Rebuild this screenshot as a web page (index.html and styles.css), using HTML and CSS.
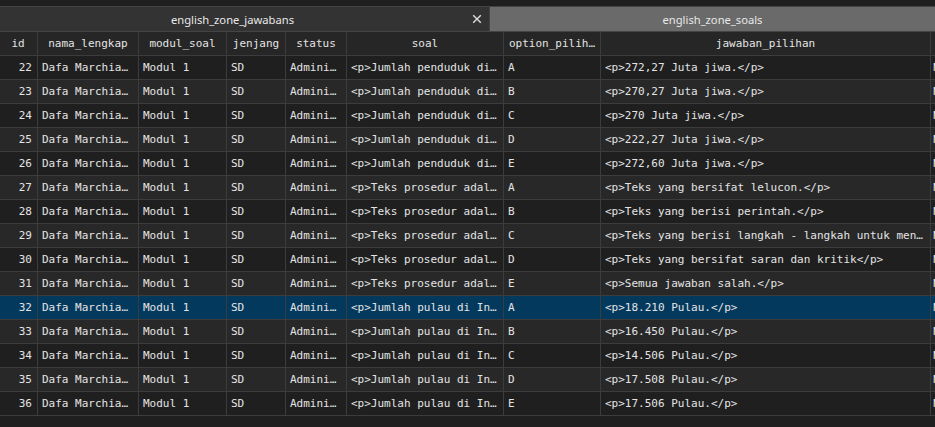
FILE: index.html
```html
<!DOCTYPE html>
<html>
<head>
<meta charset="utf-8">
<link rel="stylesheet" href="styles.css">
</head>
<body>
<div class="app">
  <div class="topstrip"></div>
  <div class="tabbar">
    <div class="tab tab-active">
      <span class="tab-label">english_zone_jawabans</span>
      <span class="tab-close"><svg width="10" height="10" viewBox="0 0 10 10"><path d="M1.2 1.2 L8.8 8.8 M8.8 1.2 L1.2 8.8" stroke="#dddddd" stroke-width="1.4" fill="none"/></svg></span>
    </div>
    <div class="tab tab-other"><span class="tab-label">english_zone_soals</span></div>
  </div>
  <div class="grid">
    <div class="row header">
      <div class="c c-id">id</div><div class="c c-nama">nama_lengkap</div><div class="c c-modul">modul_soal</div><div class="c c-jen">jenjang</div><div class="c c-stat">status</div><div class="c c-soal">soal</div><div class="c c-opt">option_pilih…</div><div class="c c-jaw">jawaban_pilihan</div><div class="c c-ext">jawaban_benar</div>
    </div>
    <div class="row even"><div class="c c-id">22</div><div class="c c-nama">Dafa Marchia…</div><div class="c c-modul">Modul 1</div><div class="c c-jen">SD</div><div class="c c-stat">Admini…</div><div class="c c-soal">&lt;p&gt;Jumlah penduduk di…</div><div class="c c-opt">A</div><div class="c c-jaw">&lt;p&gt;272,27 Juta jiwa.&lt;/p&gt;</div><div class="c c-ext">N</div></div>
    <div class="row odd"><div class="c c-id">23</div><div class="c c-nama">Dafa Marchia…</div><div class="c c-modul">Modul 1</div><div class="c c-jen">SD</div><div class="c c-stat">Admini…</div><div class="c c-soal">&lt;p&gt;Jumlah penduduk di…</div><div class="c c-opt">B</div><div class="c c-jaw">&lt;p&gt;270,27 Juta jiwa.&lt;/p&gt;</div><div class="c c-ext">N</div></div>
    <div class="row even"><div class="c c-id">24</div><div class="c c-nama">Dafa Marchia…</div><div class="c c-modul">Modul 1</div><div class="c c-jen">SD</div><div class="c c-stat">Admini…</div><div class="c c-soal">&lt;p&gt;Jumlah penduduk di…</div><div class="c c-opt">C</div><div class="c c-jaw">&lt;p&gt;270 Juta jiwa.&lt;/p&gt;</div><div class="c c-ext">N</div></div>
    <div class="row odd"><div class="c c-id">25</div><div class="c c-nama">Dafa Marchia…</div><div class="c c-modul">Modul 1</div><div class="c c-jen">SD</div><div class="c c-stat">Admini…</div><div class="c c-soal">&lt;p&gt;Jumlah penduduk di…</div><div class="c c-opt">D</div><div class="c c-jaw">&lt;p&gt;222,27 Juta jiwa.&lt;/p&gt;</div><div class="c c-ext">N</div></div>
    <div class="row even"><div class="c c-id">26</div><div class="c c-nama">Dafa Marchia…</div><div class="c c-modul">Modul 1</div><div class="c c-jen">SD</div><div class="c c-stat">Admini…</div><div class="c c-soal">&lt;p&gt;Jumlah penduduk di…</div><div class="c c-opt">E</div><div class="c c-jaw">&lt;p&gt;272,60 Juta jiwa.&lt;/p&gt;</div><div class="c c-ext">N</div></div>
    <div class="row odd"><div class="c c-id">27</div><div class="c c-nama">Dafa Marchia…</div><div class="c c-modul">Modul 1</div><div class="c c-jen">SD</div><div class="c c-stat">Admini…</div><div class="c c-soal">&lt;p&gt;Teks prosedur adal…</div><div class="c c-opt">A</div><div class="c c-jaw">&lt;p&gt;Teks yang bersifat lelucon.&lt;/p&gt;</div><div class="c c-ext">N</div></div>
    <div class="row even"><div class="c c-id">28</div><div class="c c-nama">Dafa Marchia…</div><div class="c c-modul">Modul 1</div><div class="c c-jen">SD</div><div class="c c-stat">Admini…</div><div class="c c-soal">&lt;p&gt;Teks prosedur adal…</div><div class="c c-opt">B</div><div class="c c-jaw">&lt;p&gt;Teks yang berisi perintah.&lt;/p&gt;</div><div class="c c-ext">N</div></div>
    <div class="row odd"><div class="c c-id">29</div><div class="c c-nama">Dafa Marchia…</div><div class="c c-modul">Modul 1</div><div class="c c-jen">SD</div><div class="c c-stat">Admini…</div><div class="c c-soal">&lt;p&gt;Teks prosedur adal…</div><div class="c c-opt">C</div><div class="c c-jaw">&lt;p&gt;Teks yang berisi langkah - langkah untuk men…</div><div class="c c-ext">N</div></div>
    <div class="row even"><div class="c c-id">30</div><div class="c c-nama">Dafa Marchia…</div><div class="c c-modul">Modul 1</div><div class="c c-jen">SD</div><div class="c c-stat">Admini…</div><div class="c c-soal">&lt;p&gt;Teks prosedur adal…</div><div class="c c-opt">D</div><div class="c c-jaw">&lt;p&gt;Teks yang bersifat saran dan kritik&lt;/p&gt;</div><div class="c c-ext">N</div></div>
    <div class="row odd"><div class="c c-id">31</div><div class="c c-nama">Dafa Marchia…</div><div class="c c-modul">Modul 1</div><div class="c c-jen">SD</div><div class="c c-stat">Admini…</div><div class="c c-soal">&lt;p&gt;Teks prosedur adal…</div><div class="c c-opt">E</div><div class="c c-jaw">&lt;p&gt;Semua jawaban salah.&lt;/p&gt;</div><div class="c c-ext">N</div></div>
    <div class="row selected"><div class="c c-id">32</div><div class="c c-nama">Dafa Marchia…</div><div class="c c-modul">Modul 1</div><div class="c c-jen">SD</div><div class="c c-stat">Admini…</div><div class="c c-soal">&lt;p&gt;Jumlah pulau di In…</div><div class="c c-opt">A</div><div class="c c-jaw">&lt;p&gt;18.210 Pulau.&lt;/p&gt;</div><div class="c c-ext">N</div></div>
    <div class="row odd"><div class="c c-id">33</div><div class="c c-nama">Dafa Marchia…</div><div class="c c-modul">Modul 1</div><div class="c c-jen">SD</div><div class="c c-stat">Admini…</div><div class="c c-soal">&lt;p&gt;Jumlah pulau di In…</div><div class="c c-opt">B</div><div class="c c-jaw">&lt;p&gt;16.450 Pulau.&lt;/p&gt;</div><div class="c c-ext">N</div></div>
    <div class="row even"><div class="c c-id">34</div><div class="c c-nama">Dafa Marchia…</div><div class="c c-modul">Modul 1</div><div class="c c-jen">SD</div><div class="c c-stat">Admini…</div><div class="c c-soal">&lt;p&gt;Jumlah pulau di In…</div><div class="c c-opt">C</div><div class="c c-jaw">&lt;p&gt;14.506 Pulau.&lt;/p&gt;</div><div class="c c-ext">N</div></div>
    <div class="row odd"><div class="c c-id">35</div><div class="c c-nama">Dafa Marchia…</div><div class="c c-modul">Modul 1</div><div class="c c-jen">SD</div><div class="c c-stat">Admini…</div><div class="c c-soal">&lt;p&gt;Jumlah pulau di In…</div><div class="c c-opt">D</div><div class="c c-jaw">&lt;p&gt;17.508 Pulau.&lt;/p&gt;</div><div class="c c-ext">N</div></div>
    <div class="row even"><div class="c c-id">36</div><div class="c c-nama">Dafa Marchia…</div><div class="c c-modul">Modul 1</div><div class="c c-jen">SD</div><div class="c c-stat">Admini…</div><div class="c c-soal">&lt;p&gt;Jumlah pulau di In…</div><div class="c c-opt">E</div><div class="c c-jaw">&lt;p&gt;17.506 Pulau.&lt;/p&gt;</div><div class="c c-ext">N</div></div>
  </div>
</div>
</body>
</html>
```
FILE: styles.css
```css
html, body {
  margin: 0;
  padding: 0;
  background: #1f1f1f;
  overflow: hidden;
}
.app {
  width: 935px;
  height: 427px;
  overflow: hidden;
  background: #1f1f1f;
}
.topstrip {
  height: 6px;
  background: #1f1f1f;
}
.tabbar {
  display: flex;
  height: 24px;
  border-top: 1px solid #444444;
  border-bottom: 1px solid #444444;
  font-family: "Noto Sans", "Open Sans", sans-serif;
  font-size: 11.2px;
  color: #e8e8e8;
}
.tab {
  display: flex;
  align-items: center;
  height: 24px;
}
.tab-active {
  width: 489px;
  background: #333333;
  border-right: 1px solid #444444;
}
.tab-active .tab-label {
  width: 465px;
  text-align: center;
}
.tab-close {
  width: 24px;
  display: flex;
  align-items: center;
  justify-content: center;
}
.tab-other {
  flex: 1;
  background: #6a6a6a;
  justify-content: center;
}
.grid {
  font-family: "DejaVu Sans Mono", monospace;
  font-size: 11px;
  color: #e4e4e4;
}
.row {
  display: flex;
  height: 23px;
  border-bottom: 1px solid #3c3c3c;
  width: 1200px;
}
.row.header {
  background: #262626;
}
.row.even {
  background: #1f1f1f;
}
.row.odd {
  background: #282828;
}
.row.selected {
  background: #04395e;
}
.c {
  box-sizing: border-box;
  border-right: 1px solid #3c3c3c;
  padding: 0 4px;
  line-height: 23px;
  white-space: nowrap;
  overflow: hidden;
  flex: none;
}
.header .c {
  text-align: center;
}
.c-id { width: 38px; text-align: right; padding-right: 5px; }
.c-nama { width: 101px; }
.c-modul { width: 88px; }
.c-jen { width: 59px; }
.c-stat { width: 61px; }
.c-soal { width: 157px; }
.c-opt { width: 97px; }
.c-jaw { width: 330px; }
.c-ext { width: 200px; padding-left: 2px; }
```
